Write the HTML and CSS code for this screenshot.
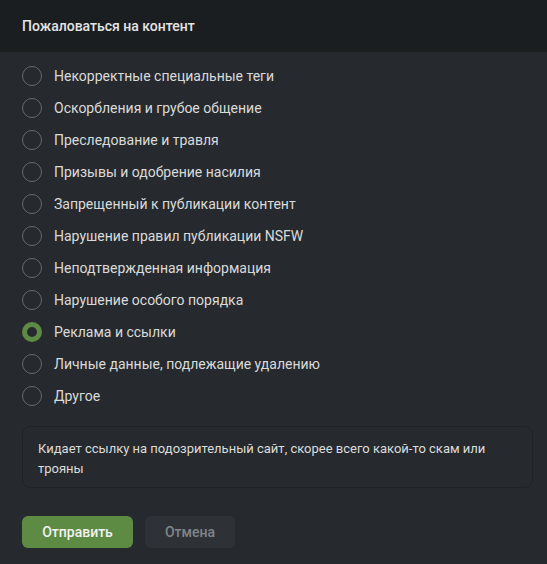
FILE: index.html
```html
<!DOCTYPE html>
<html lang="ru">
<head>
<meta charset="utf-8">
<link rel="stylesheet" href="styles.css">
</head>
<body>
<div class="modal">
  <div class="header">Пожаловаться на контент</div>
  <div class="body">
    <ul class="options">
      <li class="option"><span class="radio"></span><span>Некорректные специальные теги</span></li>
      <li class="option"><span class="radio"></span><span>Оскорбления и грубое общение</span></li>
      <li class="option"><span class="radio"></span><span>Преследование и травля</span></li>
      <li class="option"><span class="radio"></span><span>Призывы и одобрение насилия</span></li>
      <li class="option"><span class="radio"></span><span>Запрещенный к публикации контент</span></li>
      <li class="option"><span class="radio"></span><span>Нарушение правил публикации NSFW</span></li>
      <li class="option"><span class="radio"></span><span>Неподтвержденная информация</span></li>
      <li class="option"><span class="radio"></span><span>Нарушение особого порядка</span></li>
      <li class="option"><span class="radio checked"></span><span>Реклама и ссылки</span></li>
      <li class="option"><span class="radio"></span><span>Личные данные, подлежащие удалению</span></li>
      <li class="option"><span class="radio"></span><span>Другое</span></li>
    </ul>
    <div class="comment">Кидает ссылку на подозрительный сайт, скорее всего какой-то скам или трояны</div>
    <div class="actions">
      <button class="btn primary">Отправить</button>
      <button class="btn secondary">Отмена</button>
    </div>
  </div>
</div>
</body>
</html>
```

FILE: styles.css
```css
* { box-sizing: border-box; }
html, body { margin: 0; padding: 0; background: #262a2e; }
body { font-family: Roboto, "Noto Sans", sans-serif; color: #dcdcdc; width: 547px; height: 564px; overflow: hidden; }
.modal { width: 547px; height: 564px; background: #262a2e; }
.header {
  height: 52px;
  background: #1b1e21;
  padding: 0 22px;
  display: flex;
  align-items: center;
  font-size: 14px;
  font-weight: 500;
  color: #e4e4e4;
}
.body { padding: 14px 14px 0 22px; }
.options { list-style: none; margin: 0; padding: 0; display: flex; flex-direction: column; gap: 12px; }
.option { display: flex; align-items: center; height: 20px; font-size: 14px; color: #dadada; gap: 12px; }
.radio {
  width: 20px; height: 20px; border-radius: 50%;
  border: 1.5px solid #666a6e;
  flex: none;
}
.radio.checked { border: 5.5px solid #5d8b43; }
.comment {
  margin-top: 20px;
  height: 62px;
  border: 1px solid #1f2326;
  border-radius: 8px;
  padding: 12px 15px;
  font-size: 13px;
  line-height: 20px;
  color: #dcdcdc;
}
.actions { margin-top: 28px; display: flex; gap: 12px; }
.btn {
  height: 32px; border: none; border-radius: 6px;
  font-family: Roboto, "Noto Sans", sans-serif;
  font-size: 14px; font-weight: 500;
  padding: 0;
}
.primary { width: 111px; background: #5d8b43; color: #f2f2f2; }
.secondary { width: 90px; background: #2e3236; color: #80858a; }
```
